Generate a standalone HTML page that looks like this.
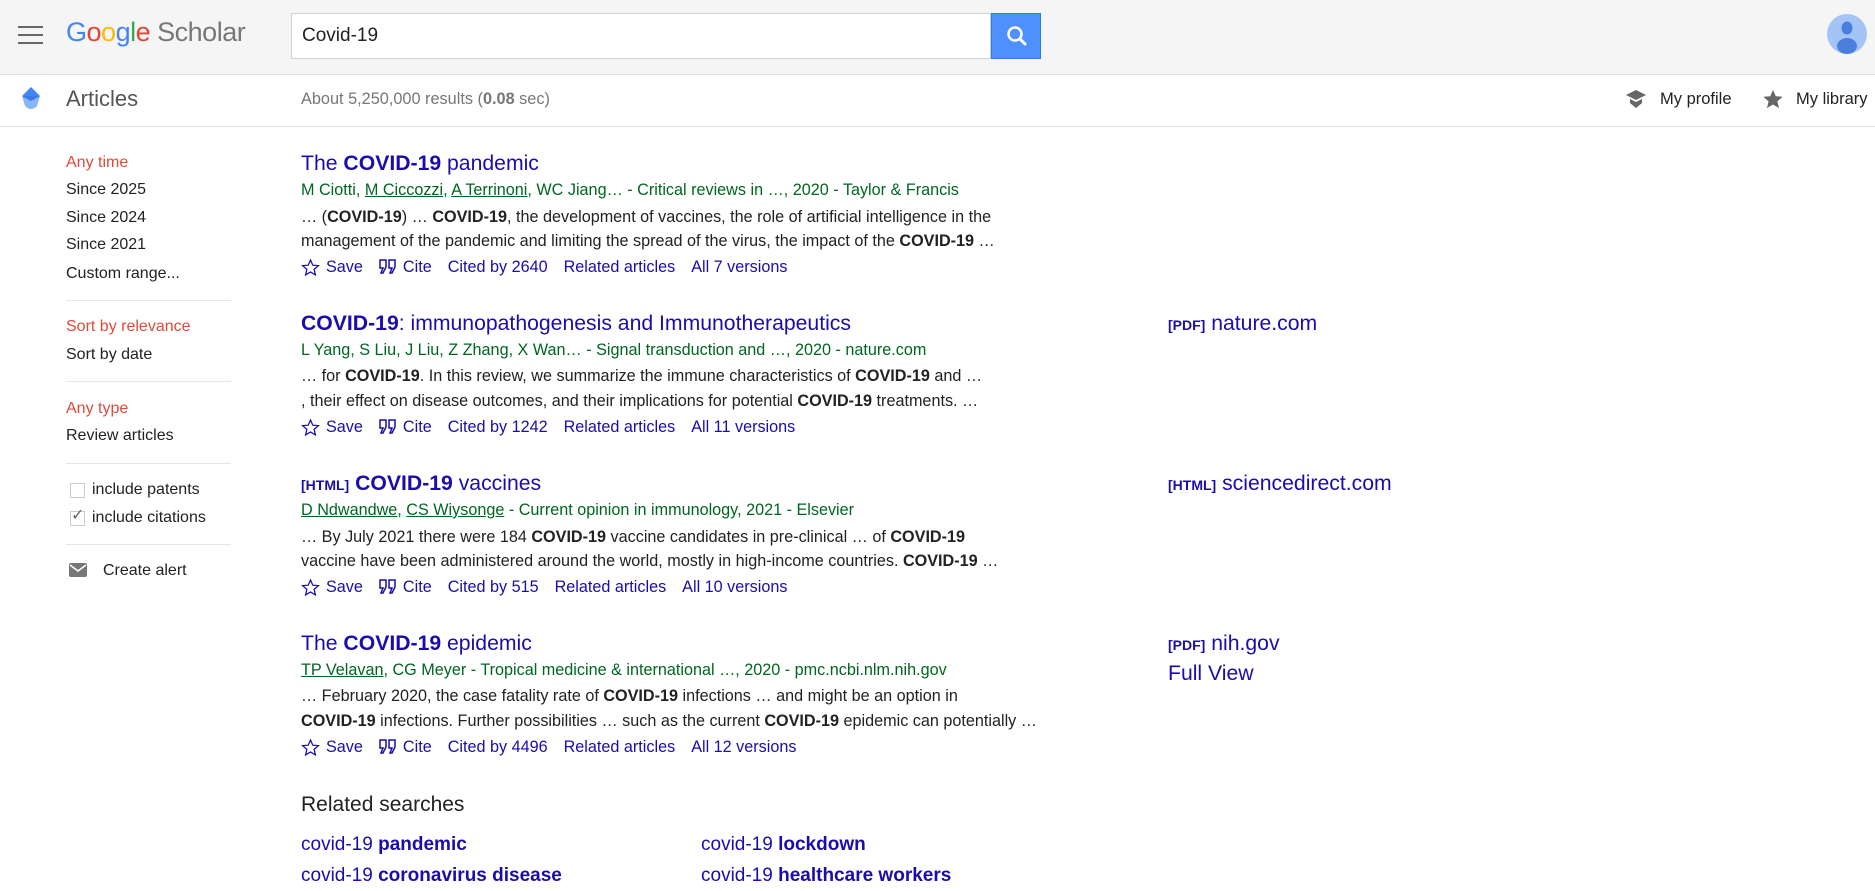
<!DOCTYPE html>
<html><head><meta charset="utf-8"><style>
body{margin:0;width:1875px;height:891px;overflow:hidden;background:#fff;font-family:"Liberation Sans",Arial,sans-serif;position:relative}
.a{position:absolute;white-space:nowrap}
#hd{position:absolute;left:0;top:0;width:1875px;height:74px;background:#f5f5f5;border-bottom:1px solid #e0e0e0}
#bar{position:absolute;left:0;top:75px;width:1875px;height:51px;border-bottom:1px solid #e0e0e0}
.sb{font-size:16px;color:#222;line-height:20px}
.red{color:#dd4b39}
.hr{position:absolute;left:66px;width:165px;height:1px;background:#e6e6e6}
.t{font-size:21.2px;color:#1a0dab;line-height:24px}
.g{font-size:16.2px;color:#006621;line-height:20px}
.g u{text-decoration:underline}
.s{font-size:16.2px;color:#222;line-height:20px}
.l{font-size:16.2px;color:#1a0dab;line-height:20px;display:flex;align-items:center}
.l span{margin-right:16px}
.l svg{margin-right:6px}
.sm{font-size:14px;font-weight:bold}
</style></head><body>
<div id="hd"></div>
<div class="a" style="left:18px;top:26px;width:25px">
<div style="height:2px;background:#666;margin-bottom:6px"></div><div style="height:2px;background:#666;margin-bottom:6px"></div><div style="height:2px;background:#666"></div></div>
<div class="a" style="left:66px;top:15px;font-size:27px;line-height:34px;letter-spacing:-0.5px"><span style="color:#4285f4">G</span><span style="color:#ea4335">o</span><span style="color:#fbbc05">o</span><span style="color:#4285f4">g</span><span style="color:#34a853">l</span><span style="color:#ea4335">e</span> <span style="color:#777">Scholar</span></div>
<div class="a" style="left:291px;top:13px;width:700px;height:46px;background:#fff;border:1px solid #d0d0d0;box-sizing:border-box"></div>
<div class="a" style="left:302px;top:25px;font-size:19px;color:#222">Covid-19</div>
<div class="a" style="left:991px;top:13px;width:50px;height:46px;background:#4d90fe;border:1px solid #3079ed;box-sizing:border-box">
<svg width="50" height="46" viewBox="0 0 50 46"><circle cx="23" cy="20" r="6.5" fill="none" stroke="#fff" stroke-width="2.5"/><path d="M28 25 L33 30" stroke="#fff" stroke-width="3" stroke-linecap="round"/></svg></div>
<svg class="a" style="left:1827px;top:14px" width="40" height="40" viewBox="0 0 40 40"><circle cx="20" cy="20" r="20" fill="#a5c4f6"/><ellipse cx="20" cy="14" rx="5.5" ry="6.5" fill="#4a7fe0"/><ellipse cx="20" cy="32" rx="10" ry="8" fill="#4a7fe0"/></svg>
<div id="bar"></div>
<svg class="a" style="left:20px;top:86px" width="22" height="26" viewBox="0 0 22 26"><path d="M11 1 L20 10 L2 10 Z" fill="#4285f4"/><path d="M2 10 L20 10 L17 20 Q11 26 5 20 Z" fill="#8ab4f8"/><path d="M2 10 L20 10 L11 15Z" fill="#3b78e7"/></svg>
<div class="a" style="left:66px;top:86px;font-size:22px;color:#555;line-height:26px">Articles</div>
<div class="a" style="left:301px;top:90px;font-size:16.3px;color:#777">About 5,250,000 results (<b>0.08</b> sec)</div>
<svg class="a" style="left:1625px;top:88px" width="22" height="22" viewBox="0 0 22 22"><path d="M11 2 L21 7 L11 12 L1 7Z" fill="#666"/><path d="M5 11 L5 15 L11 20 L17 15 L17 11 L11 14Z" fill="#666"/></svg>
<div class="a" style="left:1660px;top:90px;font-size:16.5px;color:#222">My profile</div>
<svg class="a" style="left:1762px;top:88px" width="22" height="22" viewBox="0 0 24 24"><path d="M12 2l3 7 7.5.6-5.7 5 1.8 7.4L12 18l-6.6 4 1.8-7.4-5.7-5L9 9z" fill="#666"/></svg>
<div class="a" style="left:1796px;top:90px;font-size:16.5px;color:#222">My library</div>

<div class="a sb red" style="left:66px;top:153px">Any time</div>
<div class="a sb" style="left:66px;top:180px">Since 2025</div>
<div class="a sb" style="left:66px;top:208px">Since 2024</div>
<div class="a sb" style="left:66px;top:235px">Since 2021</div>
<div class="a sb" style="left:66px;top:264px">Custom range...</div>
<div class="hr" style="top:300px"></div>
<div class="a sb red" style="left:66px;top:317px">Sort by relevance</div>
<div class="a sb" style="left:66px;top:345px">Sort by date</div>
<div class="hr" style="top:381px"></div>
<div class="a sb red" style="left:66px;top:399px">Any type</div>
<div class="a sb" style="left:66px;top:426px">Review articles</div>
<div class="hr" style="top:463px"></div>
<div class="a" style="left:70px;top:483px;width:13px;height:13px;border:1px solid #ccc"></div>
<div class="a sb" style="left:92px;top:480px">include patents</div>
<div class="a" style="left:70px;top:511px;width:13px;height:13px;border:1px solid #ccc"></div>
<div class="a" style="left:71px;top:505px;font-size:16px;color:#666">✓</div>
<div class="a sb" style="left:92px;top:508px">include citations</div>
<div class="hr" style="top:544px"></div>
<svg class="a" style="left:69px;top:563px" width="18" height="14" viewBox="0 0 18 14"><rect width="18" height="14" rx="2" fill="#777"/><path d="M1 2 L9 8 L17 2" stroke="#fff" stroke-width="1.5" fill="none"/></svg>
<div class="a sb" style="left:103px;top:561px">Create alert</div>

<!-- r1 -->
<div class="a t" style="left:301px;top:152px">The <b>COVID-19</b> pandemic</div>
<div class="a g" style="left:301px;top:180px">M Ciotti, <u>M Ciccozzi</u>, <u>A Terrinoni</u>, WC Jiang… - Critical reviews in …, 2020 - Taylor &amp; Francis</div>
<div class="a s" style="left:301px;top:207px">… (<b>COVID-19</b>) … <b>COVID-19</b>, the development of vaccines, the role of artificial intelligence in the</div>
<div class="a s" style="left:301px;top:231px">management of the pandemic and limiting the spread of the virus, the impact of the <b>COVID-19</b> …</div>
<div class="a l" style="left:301px;top:257px"><svg width="19" height="19" viewBox="0 0 24 24"><path d="M12 2.5l2.9 6.6 7.1.6-5.4 4.7 1.6 7L12 17.7l-6.2 3.7 1.6-7L2 9.7l7.1-.6z" fill="none" stroke="#1a0dab" stroke-width="1.6"/></svg><span>Save</span><svg width="18" height="16" viewBox="0 0 18 16"><path d="M1 1h6v7l-3 6H2l2-5H1zM10 1h6v7l-3 6h-2l2-5h-3z" fill="none" stroke="#1a0dab" stroke-width="1.5"/></svg><span>Cite</span><span>Cited by 2640</span><span>Related articles</span><span>All 7 versions</span></div>
<!-- r2 -->
<div class="a t" style="left:301px;top:312px"><b>COVID-19</b>: immunopathogenesis and Immunotherapeutics</div>
<div class="a g" style="left:301px;top:340px">L Yang, S Liu, J Liu, Z Zhang, X Wan… - Signal transduction and …, 2020 - nature.com</div>
<div class="a s" style="left:301px;top:366px">… for <b>COVID-19</b>. In this review, we summarize the immune characteristics of <b>COVID-19</b> and …</div>
<div class="a s" style="left:301px;top:391px">, their effect on disease outcomes, and their implications for potential <b>COVID-19</b> treatments. …</div>
<div class="a l" style="left:301px;top:417px"><svg width="19" height="19" viewBox="0 0 24 24"><path d="M12 2.5l2.9 6.6 7.1.6-5.4 4.7 1.6 7L12 17.7l-6.2 3.7 1.6-7L2 9.7l7.1-.6z" fill="none" stroke="#1a0dab" stroke-width="1.6"/></svg><span>Save</span><svg width="18" height="16" viewBox="0 0 18 16"><path d="M1 1h6v7l-3 6H2l2-5H1zM10 1h6v7l-3 6h-2l2-5h-3z" fill="none" stroke="#1a0dab" stroke-width="1.5"/></svg><span>Cite</span><span>Cited by 1242</span><span>Related articles</span><span>All 11 versions</span></div>
<div class="a t" style="left:1168px;top:312px;color:#1a0dab"><span class="sm">[PDF]</span> nature.com</div>
<!-- r3 -->
<div class="a t" style="left:301px;top:472px"><span class="sm">[HTML]</span> <b>COVID-19</b> vaccines</div>
<div class="a g" style="left:301px;top:500px"><u>D Ndwandwe</u>, <u>CS Wiysonge</u> - Current opinion in immunology, 2021 - Elsevier</div>
<div class="a s" style="left:301px;top:527px">… By July 2021 there were 184 <b>COVID-19</b> vaccine candidates in pre-clinical … of <b>COVID-19</b></div>
<div class="a s" style="left:301px;top:551px">vaccine have been administered around the world, mostly in high-income countries. <b>COVID-19</b> …</div>
<div class="a l" style="left:301px;top:577px"><svg width="19" height="19" viewBox="0 0 24 24"><path d="M12 2.5l2.9 6.6 7.1.6-5.4 4.7 1.6 7L12 17.7l-6.2 3.7 1.6-7L2 9.7l7.1-.6z" fill="none" stroke="#1a0dab" stroke-width="1.6"/></svg><span>Save</span><svg width="18" height="16" viewBox="0 0 18 16"><path d="M1 1h6v7l-3 6H2l2-5H1zM10 1h6v7l-3 6h-2l2-5h-3z" fill="none" stroke="#1a0dab" stroke-width="1.5"/></svg><span>Cite</span><span>Cited by 515</span><span>Related articles</span><span>All 10 versions</span></div>
<div class="a t" style="left:1168px;top:472px"><span class="sm">[HTML]</span> sciencedirect.com</div>
<!-- r4 -->
<div class="a t" style="left:301px;top:632px">The <b>COVID-19</b> epidemic</div>
<div class="a g" style="left:301px;top:660px"><u>TP Velavan</u>, CG Meyer - Tropical medicine &amp; international …, 2020 - pmc.ncbi.nlm.nih.gov</div>
<div class="a s" style="left:301px;top:686px">… February 2020, the case fatality rate of <b>COVID-19</b> infections … and might be an option in</div>
<div class="a s" style="left:301px;top:711px"><b>COVID-19</b> infections. Further possibilities … such as the current <b>COVID-19</b> epidemic can potentially …</div>
<div class="a l" style="left:301px;top:737px"><svg width="19" height="19" viewBox="0 0 24 24"><path d="M12 2.5l2.9 6.6 7.1.6-5.4 4.7 1.6 7L12 17.7l-6.2 3.7 1.6-7L2 9.7l7.1-.6z" fill="none" stroke="#1a0dab" stroke-width="1.6"/></svg><span>Save</span><svg width="18" height="16" viewBox="0 0 18 16"><path d="M1 1h6v7l-3 6H2l2-5H1zM10 1h6v7l-3 6h-2l2-5h-3z" fill="none" stroke="#1a0dab" stroke-width="1.5"/></svg><span>Cite</span><span>Cited by 4496</span><span>Related articles</span><span>All 12 versions</span></div>
<div class="a t" style="left:1168px;top:632px"><span class="sm">[PDF]</span> nih.gov</div>
<div class="a t" style="left:1168px;top:662px">Full View</div>

<div class="a" style="left:301px;top:793px;font-size:21px;color:#222">Related searches</div>
<div class="a t" style="left:301px;top:833px;font-size:19px">covid-19 <b>pandemic</b></div>
<div class="a t" style="left:701px;top:833px;font-size:19px">covid-19 <b>lockdown</b></div>
<div class="a t" style="left:301px;top:864px;font-size:19px">covid-19 <b>coronavirus disease</b></div>
<div class="a t" style="left:701px;top:864px;font-size:19px">covid-19 <b>healthcare workers</b></div>
</body></html>
